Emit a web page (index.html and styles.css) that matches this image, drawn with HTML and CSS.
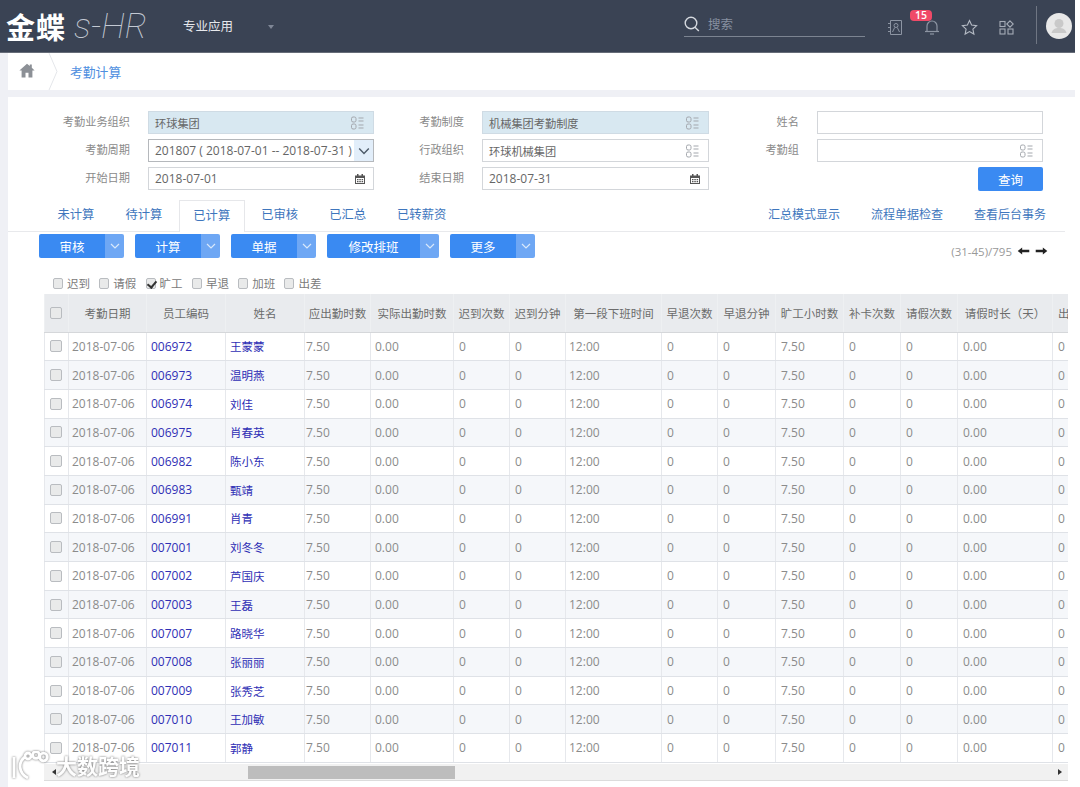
FILE: index.html
```html
<!DOCTYPE html>
<html lang="zh-CN">
<head>
<meta charset="utf-8">
<title>考勤计算</title>
<link rel="stylesheet" href="styles.css">
</head>
<body>
<svg class="defs" width="0" height="0">
  <symbol id="pick" viewBox="0 0 14 14"><g fill="none" stroke="currentColor" stroke-width="1"><rect x="1.5" y="1" width="4.5" height="5" rx="1.6"/><rect x="1.5" y="8" width="4.5" height="5" rx="1.6"/><path d="M8.5 2h5M8.5 5h5M8.5 9h5M8.5 12h5"/></g></symbol>
  <symbol id="cal" viewBox="0 0 12 12"><path fill="currentColor" d="M1 2.500h2V1h1.500v1.500h3V1H9v1.500h2V11H1zM2 5v5h8V5z"/><path fill="currentColor" d="M3 6h1.500v1.200H3zM5.300 6h1.500v1.200H5.300zM7.600 6h1.500v1.200H7.600zM3 8h1.500v1.200H3zM5.300 8h1.500v1.200H5.300zM7.600 8h1.500v1.200H7.600z"/></symbol>
  <symbol id="chev" viewBox="0 0 10 6"><path fill="none" stroke="currentColor" stroke-width="1.200" d="M1 1l4 4 4-4"/></symbol>
</svg>

<header class="top">
  <div class="brand"><span class="brand-cn">金蝶</span><span class="brand-en">s-HR</span></div>
  <div class="menu">专业应用</div>
  <span class="menu-caret"></span>
  <div class="search">
    <svg class="search-icon" width="16" height="16" viewBox="0 0 16 16"><g fill="none" stroke="#d5d9df" stroke-width="1.400"><circle cx="7" cy="7" r="5.800"/><path d="M11 11.200l3.800 3.800"/></g></svg>
    <span>搜索</span>
  </div>
  <div class="tools">
    <svg class="ico-book" width="16" height="17" viewBox="0 0 16 17"><g fill="none" stroke="#8d95a3" stroke-width="1"><path d="M3.500 1.500h11v14h-11zM1 4.500h3M1 8.500h3M1 12.500h3"/><circle cx="9" cy="6.500" r="2"/><path d="M5.500 13l2.200-4.500M12.500 13l-2.200-4.500"/></g></svg>
    <div class="bell">
      <svg width="16" height="17" viewBox="0 0 16 17"><g fill="none" stroke="#8d95a3" stroke-width="1.200"><path d="M3 12V7a5 5 0 0 1 10 0v5"/><path d="M1 12.500h14"/><path d="M6 15h4"/></g></svg>
      <span class="badge">15</span>
    </div>
    <svg class="ico-star" width="17" height="17" viewBox="0 0 17 17"><path fill="none" stroke="#b4bac4" stroke-width="1.100" d="M8.500 1.500l2.100 4.600 5 .6-3.700 3.400 1 5-4.400-2.500-4.400 2.500 1-5L1.400 6.700l5-.6z"/></svg>
    <svg class="ico-apps" width="15" height="15" viewBox="0 0 15 15"><g fill="none" stroke="#a5abb6" stroke-width="1.100"><rect x="1" y="1.500" width="5" height="5"/><path d="M11 .8l3.200 3.200-3.200 3.200L7.800 4z"/><rect x="1" y="9" width="5" height="5"/><rect x="9" y="9" width="5" height="5"/></g></svg>
  </div>
  <div class="avatar">
    <svg width="26" height="26" viewBox="0 0 26 26"><circle cx="13" cy="13" r="13" fill="#e8e8e8"/><circle cx="13" cy="10.500" r="4.500" fill="#c9c9c9"/><path fill="#c9c9c9" d="M5.500 20c1-4 4-5 7.500-5s6.500 1 7.500 5z"/></svg>
  </div>
</header>

<div class="shell">
  <nav class="crumbs">
    <svg class="home" width="16" height="15" viewBox="0 0 16 15"><path fill="#8c9096" d="M8 .8L.4 7.600h2.200V14.500h3.900V9.800h3V14.500h3.900V7.600h2.200L12.800 4.800V1.600h-2v1.400z"/></svg>
    <svg class="crumb-sep" width="10" height="37" viewBox="0 0 10 37"><path fill="none" stroke="#e4e6ea" d="M1 0l8 18.500L1 37"/></svg>
    <a class="crumb-link">考勤计算</a>
  </nav>

  <main class="panel">
    <section class="form">
      <label class="lab">考勤业务组织</label>
      <div class="field shade"><span>环球集团</span><svg class="f-ico"><use href="#pick"/></svg></div>
      <label class="lab">考勤制度</label>
      <div class="field shade"><span>机械集团考勤制度</span><svg class="f-ico"><use href="#pick"/></svg></div>
      <label class="lab">姓名</label>
      <div class="field"></div>

      <label class="lab">考勤周期</label>
      <div class="field select"><span>201807 ( 2018-07-01 -- 2018-07-31 )</span><b class="sel-btn"><svg width="12" height="8"><use href="#chev"/></svg></b></div>
      <label class="lab">行政组织</label>
      <div class="field"><span>环球机械集团</span><svg class="f-ico"><use href="#pick"/></svg></div>
      <label class="lab">考勤组</label>
      <div class="field"><span></span><svg class="f-ico"><use href="#pick"/></svg></div>

      <label class="lab">开始日期</label>
      <div class="field date"><span>2018-07-01</span><svg class="f-cal"><use href="#cal"/></svg></div>
      <label class="lab">结束日期</label>
      <div class="field date"><span>2018-07-31</span><svg class="f-cal"><use href="#cal"/></svg></div>
      <div class="query-cell"><button class="query">查询</button></div>
    </section>

    <section class="tabs">
      <a class="tab">未计算</a>
      <a class="tab">待计算</a>
      <a class="tab on">已计算</a>
      <a class="tab">已审核</a>
      <a class="tab">已汇总</a>
      <a class="tab">已转薪资</a>
      <div class="links"><a>汇总模式显示</a><a>流程单据检查</a><a>查看后台事务</a></div>
    </section>

    <section class="toolbar">
      <div class="bgroup"><button class="bmain">审核</button><button class="bcaret"><svg width="10" height="6"><use href="#chev"/></svg></button></div>
      <div class="bgroup"><button class="bmain">计算</button><button class="bcaret"><svg width="10" height="6"><use href="#chev"/></svg></button></div>
      <div class="bgroup"><button class="bmain">单据</button><button class="bcaret"><svg width="10" height="6"><use href="#chev"/></svg></button></div>
      <div class="bgroup"><button class="bmain wide">修改排班</button><button class="bcaret"><svg width="10" height="6"><use href="#chev"/></svg></button></div>
      <div class="bgroup"><button class="bmain">更多</button><button class="bcaret"><svg width="10" height="6"><use href="#chev"/></svg></button></div>
      <div class="pager">(31-45)/795
        <svg width="13" height="8" viewBox="0 0 13 9"><path fill="#222" d="M0 4.500L5 .5v2.500h8v3H5v2.500z"/></svg>
        <svg width="13" height="8" viewBox="0 0 13 9"><path fill="#222" d="M13 4.500L8 .5v2.500H0v3h8v2.500z"/></svg>
      </div>
    </section>

    <section class="filters">
      <label class="flt"><i class="cb"></i>迟到</label>
      <label class="flt"><i class="cb"></i>请假</label>
      <label class="flt"><i class="cb checked"></i>旷工</label>
      <label class="flt"><i class="cb"></i>早退</label>
      <label class="flt"><i class="cb"></i>加班</label>
      <label class="flt"><i class="cb"></i>出差</label>
    </section>

    <section class="grid">
      <div class="grid-body">
        <table>
          <colgroup>
            <col class="c24"><col class="c78"><col class="c79"><col class="c79"><col class="c66"><col class="c83"><col class="c56"><col class="c56"><col class="c96"><col class="c56"><col class="c58"><col class="c68"><col class="c57"><col class="c57"><col class="c95"><col class="c66">
          </colgroup>
          <thead>
            <tr><th><i class="cb big"></i></th><th>考勤日期</th><th>员工编码</th><th>姓名</th><th>应出勤时数</th><th>实际出勤时数</th><th>迟到次数</th><th>迟到分钟</th><th>第一段下班时间</th><th>早退次数</th><th>早退分钟</th><th>旷工小时数</th><th>补卡次数</th><th>请假次数</th><th>请假时长（天）</th><th class="left">出</th></tr>
          </thead>
          <tbody>
            <tr><td class="chk"><i class="cb big"></i></td><td>2018-07-06</td><td class="code">006972</td><td class="name">王蒙蒙</td><td>7.50</td><td>0.00</td><td>0</td><td>0</td><td>12:00</td><td>0</td><td>0</td><td>7.50</td><td>0</td><td>0</td><td>0.00</td><td>0</td></tr>
            <tr><td class="chk"><i class="cb big"></i></td><td>2018-07-06</td><td class="code">006973</td><td class="name">温明燕</td><td>7.50</td><td>0.00</td><td>0</td><td>0</td><td>12:00</td><td>0</td><td>0</td><td>7.50</td><td>0</td><td>0</td><td>0.00</td><td>0</td></tr>
            <tr><td class="chk"><i class="cb big"></i></td><td>2018-07-06</td><td class="code">006974</td><td class="name">刘佳</td><td>7.50</td><td>0.00</td><td>0</td><td>0</td><td>12:00</td><td>0</td><td>0</td><td>7.50</td><td>0</td><td>0</td><td>0.00</td><td>0</td></tr>
            <tr><td class="chk"><i class="cb big"></i></td><td>2018-07-06</td><td class="code">006975</td><td class="name">肖春英</td><td>7.50</td><td>0.00</td><td>0</td><td>0</td><td>12:00</td><td>0</td><td>0</td><td>7.50</td><td>0</td><td>0</td><td>0.00</td><td>0</td></tr>
            <tr><td class="chk"><i class="cb big"></i></td><td>2018-07-06</td><td class="code">006982</td><td class="name">陈小东</td><td>7.50</td><td>0.00</td><td>0</td><td>0</td><td>12:00</td><td>0</td><td>0</td><td>7.50</td><td>0</td><td>0</td><td>0.00</td><td>0</td></tr>
            <tr><td class="chk"><i class="cb big"></i></td><td>2018-07-06</td><td class="code">006983</td><td class="name">甄靖</td><td>7.50</td><td>0.00</td><td>0</td><td>0</td><td>12:00</td><td>0</td><td>0</td><td>7.50</td><td>0</td><td>0</td><td>0.00</td><td>0</td></tr>
            <tr><td class="chk"><i class="cb big"></i></td><td>2018-07-06</td><td class="code">006991</td><td class="name">肖青</td><td>7.50</td><td>0.00</td><td>0</td><td>0</td><td>12:00</td><td>0</td><td>0</td><td>7.50</td><td>0</td><td>0</td><td>0.00</td><td>0</td></tr>
            <tr><td class="chk"><i class="cb big"></i></td><td>2018-07-06</td><td class="code">007001</td><td class="name">刘冬冬</td><td>7.50</td><td>0.00</td><td>0</td><td>0</td><td>12:00</td><td>0</td><td>0</td><td>7.50</td><td>0</td><td>0</td><td>0.00</td><td>0</td></tr>
            <tr><td class="chk"><i class="cb big"></i></td><td>2018-07-06</td><td class="code">007002</td><td class="name">芦国庆</td><td>7.50</td><td>0.00</td><td>0</td><td>0</td><td>12:00</td><td>0</td><td>0</td><td>7.50</td><td>0</td><td>0</td><td>0.00</td><td>0</td></tr>
            <tr><td class="chk"><i class="cb big"></i></td><td>2018-07-06</td><td class="code">007003</td><td class="name">王磊</td><td>7.50</td><td>0.00</td><td>0</td><td>0</td><td>12:00</td><td>0</td><td>0</td><td>7.50</td><td>0</td><td>0</td><td>0.00</td><td>0</td></tr>
            <tr><td class="chk"><i class="cb big"></i></td><td>2018-07-06</td><td class="code">007007</td><td class="name">路晓华</td><td>7.50</td><td>0.00</td><td>0</td><td>0</td><td>12:00</td><td>0</td><td>0</td><td>7.50</td><td>0</td><td>0</td><td>0.00</td><td>0</td></tr>
            <tr><td class="chk"><i class="cb big"></i></td><td>2018-07-06</td><td class="code">007008</td><td class="name">张丽丽</td><td>7.50</td><td>0.00</td><td>0</td><td>0</td><td>12:00</td><td>0</td><td>0</td><td>7.50</td><td>0</td><td>0</td><td>0.00</td><td>0</td></tr>
            <tr><td class="chk"><i class="cb big"></i></td><td>2018-07-06</td><td class="code">007009</td><td class="name">张秀芝</td><td>7.50</td><td>0.00</td><td>0</td><td>0</td><td>12:00</td><td>0</td><td>0</td><td>7.50</td><td>0</td><td>0</td><td>0.00</td><td>0</td></tr>
            <tr><td class="chk"><i class="cb big"></i></td><td>2018-07-06</td><td class="code">007010</td><td class="name">王加敏</td><td>7.50</td><td>0.00</td><td>0</td><td>0</td><td>12:00</td><td>0</td><td>0</td><td>7.50</td><td>0</td><td>0</td><td>0.00</td><td>0</td></tr>
            <tr><td class="chk"><i class="cb big"></i></td><td>2018-07-06</td><td class="code">007011</td><td class="name">郭静</td><td>7.50</td><td>0.00</td><td>0</td><td>0</td><td>12:00</td><td>0</td><td>0</td><td>7.50</td><td>0</td><td>0</td><td>0.00</td><td>0</td></tr>
          </tbody>
        </table>
      </div>
      <div class="hbar">
        <span class="arr-l"></span>
        <span class="thumb"></span>
        <span class="arr-r"></span>
      </div>
    </section>
  </main>
</div>

<div class="watermark">
  <svg width="40" height="30" viewBox="0 0 40 30"><g fill="none" stroke="#fff" stroke-width="2.800"><path d="M5 6v21"/><path d="M16 6C9 11 9 22 19 27"/><circle cx="19" cy="5" r="3"/><circle cx="27" cy="4" r="3.400"/><circle cx="34.500" cy="6" r="3.800"/></g></svg>
  <span>大数跨境</span>
</div>
</body>
</html>
```
FILE: styles.css
```css
* { box-sizing: border-box; }
html, body { margin: 0; height: 100%; overflow: hidden; background: #fff; }
body {
  width: 1080px;
  height: 787px;
  position: relative;
  font: 12px "Open Sans", "Noto Sans CJK SC", sans-serif;
  color: #777;
}
.defs { position: absolute; }
a { cursor: pointer; }
button { font: inherit; border: 0; padding: 0; color: #fff; }

/* header */
.top {
  width: 1075px;
  height: 53px;
  background: #3a4354;
  border-bottom: 1px solid #666c78;
  display: flex;
  align-items: center;
  color: #fff;
}
.brand { width: 183px; padding-left: 6px; display: flex; align-items: center; height: 52px; }
.brand-cn { font-size: 29px; font-weight: 700; letter-spacing: 1px; color: #fff; width: 68px; white-space: nowrap; }
.brand-en { font: italic 100 35px "Roboto", sans-serif; color: #c3c9d3; white-space: nowrap; }
.menu { font-size: 12.500px; color: #e6e8ec; width: 85px; margin-top: -2px; }
.menu-caret { width: 0; height: 0; border: 3.500px solid transparent; border-top: 4px solid #7f8796; border-bottom: 0; margin-top: 1px; }
.search {
  margin-left: 410px;
  width: 181px;
  height: 26px;
  margin-top: -4px;
  border-bottom: 1px solid #7c8491;
  display: flex;
  align-items: center;
  gap: 8px;
  padding-bottom: 0;
  font-size: 12.500px;
  color: #8790a0;
}
.tools { margin-left: 22px; width: 150px; display: flex; align-items: center; margin-top: 2px; }
.bell { margin-left: 21px; position: relative; height: 17px; }
.badge {
  position: absolute;
  left: -14px;
  top: -9px;
  width: 22px;
  height: 11px;
  line-height: 11px;
  border-radius: 4px;
  background: #f04a68;
  color: #fff;
  font-size: 10.500px;
  font-weight: 600;
  text-align: center;
}
.ico-star { margin-left: 21px; }
.ico-apps { margin-left: 21px; }
.avatar {
  border-left: 1px solid #6f7683;
  height: 38px;
  padding-left: 9px;
  margin-left: -1px;
  margin-top: -2px;
  display: flex;
  align-items: center;
}
.avatar svg { margin-top: 2px; }

/* page shell */
.shell { padding-left: 8px; background: #eff0f5; width: 1075px; height: 734px; }
.crumbs {
  height: 37px;
  background: #fff;
  display: flex;
  align-items: center;
  padding-left: 11px;
  margin-bottom: 7px;
}
.home { margin-top: -2px; }
.crumb-sep { margin-left: 13px; }
.crumb-link { margin-left: 12px; color: #4f8fe0; font-size: 12.800px; }

.panel { background: #fff; height: 690px; padding-top: 14px; }

/* form */
.form {
  display: grid;
  grid-template-columns: 140px 226px 108px 227px 108px 226px;
  grid-auto-rows: 23px;
  row-gap: 5px;
  width: 1035px;
}
.lab { text-align: right; padding-right: 18px; line-height: 22px; font-size: 11.200px; color: #8a8a8a; }
.field {
  border: 1px solid #d3d6da;
  background: #fff;
  display: flex;
  align-items: center;
  justify-content: space-between;
  padding: 0 6px;
  font-size: 11.200px;
  color: #666;
}
.field.date { font-size: 12px; }
.field.shade { background: #d8e8f1; border-color: #cfdbe4; }
.f-ico { width: 14px; height: 14px; color: #a3a7ad; margin-right: 3px; }
.f-cal { width: 12px; height: 12px; color: #555; margin-right: 1px; }
.field.select { padding: 0 0 0 6px; border: 1.500px solid #b5b8bc; font-size: 12px; white-space: nowrap; }
.sel-btn {
  width: 19px;
  height: 100%;
  background: #e2eefa;
  display: flex;
  align-items: center;
  justify-content: center;
  color: #4d5a68;
  flex: none;
}
.query-cell { grid-column: 6; display: flex; justify-content: flex-end; }
.query { width: 65px; height: 24px; background: #3a8af2; border-radius: 2px; font-size: 12.500px; }

/* tabs */
.tabs {
  margin-top: 10px;
  height: 32px;
  width: 1057px;
  padding-left: 35px;
  display: flex;
  border-bottom: 1px solid #e8e9ec;
  font-size: 12.300px;
  color: #3e76bd;
}
.tab { padding: 0 14.500px; margin-right: 2px; height: 31px; line-height: 29px; text-align: center; white-space: nowrap; }
.tab.on { background: #fff; border: 1px solid #e6e7ea; border-bottom: 0; height: 32px; padding: 0 13.500px; }
.links { margin-left: auto; display: flex; gap: 31px; line-height: 29px; padding-right: 19px; font-size: 12px; }

/* toolbar */
.toolbar { margin-top: 2px; height: 24px; display: flex; padding-left: 31px; gap: 11px; width: 1040px; }
.bgroup { display: flex; }
.bmain { width: 66px; height: 24px; background: #3a8af2; border-radius: 2px 0 0 2px; font-size: 12.500px; }
.bmain.wide { width: 93px; }
.bcaret {
  width: 19px;
  height: 24px;
  background: #6ea7f4;
  border-radius: 0 2px 2px 0;
  color: #d9e8fb;
  display: flex;
  align-items: center;
  justify-content: center;
}
.pager { margin-left: auto; display: flex; align-items: center; gap: 5px; font-size: 11.500px; color: #999; height: 14px; margin-top: 10px; white-space: nowrap; }

/* filters */
.filters { margin-top: 19px; height: 13px; padding-left: 45px; display: flex; line-height: 13px; }
.flt { width: 46.300px; display: flex; align-items: center; gap: 4px; font-size: 11.500px; color: #7a7a7a; white-space: nowrap; }
.cb {
  display: block;
  flex: none;
  width: 10px;
  height: 11px;
  border: 1px solid #b9bcc0;
  border-radius: 2px;
  background: #e9eaea;
  position: relative;
}
.cb.big { width: 12px; height: 12px; margin-left: 5px; }
.cb.checked::after {
  content: "";
  position: absolute;
  left: 2px;
  top: 0;
  width: 4px;
  height: 7px;
  border: solid #333;
  border-width: 0 2px 2px 0;
  transform: rotate(40deg);
}

/* table */
.grid { margin: 4px 0 0 36px; width: 1024px; }
.grid-body { height: 470px; overflow: hidden; }
table { border-collapse: collapse; table-layout: fixed; width: 1074px; }
.c24 { width: 24px; } .c78 { width: 78px; } .c79 { width: 79px; } .c66 { width: 66px; }
.c83 { width: 83px; } .c56 { width: 56px; } .c96 { width: 96px; } .c58 { width: 58px; }
.c68 { width: 68px; } .c57 { width: 57px; } .c95 { width: 95px; }
th {
  height: 38px;
  background: #e9ebee;
  border-left: 1px solid #eef0f2;
  font-weight: 400;
  font-size: 11.500px;
  color: #6b6b6b;
  padding: 0;
  text-align: center;
  white-space: nowrap;
  overflow: hidden;
  border-bottom: 1px solid #d5d7da;
}
th.left { text-align: left; padding-left: 5px; }
td {
  height: 28.700px;
  padding: 0 0 0 5px;
  border-left: 1px solid #e6e8ec;
  border-bottom: 1px solid #dfe2e7;
  font-size: 12px;
  color: #8b8b8b;
  white-space: nowrap;
}
td.chk { padding: 0; }
td:nth-child(2), td:nth-child(9) { padding-left: 3px; }
td:nth-child(3), td:nth-child(4), td:nth-child(6) { padding-left: 4px; }
td:nth-child(5) { padding-left: 1px; }
td.code { color: #2f2fb5; }
td.name { color: #2f2fb5; font-size: 11.500px; }
tbody tr:nth-child(even) td { background: #f5f7fa; }

.hbar {
  height: 17px;
  background: #f1f1f1;
  border-bottom: 1px solid #dcdcdc;
  display: flex;
  align-items: center;
}
.arr-l { width: 0; height: 0; border: 3.500px solid transparent; border-right: 4px solid #333; border-left: 0; margin-left: 8px; }
.thumb { width: 207px; height: 13px; background: #bdbdbd; margin-left: 192px; }
.arr-r { width: 0; height: 0; border: 3.500px solid transparent; border-left: 4px solid #333; border-right: 0; margin-left: auto; margin-right: 6px; }

/* watermark */
.watermark {
  position: absolute;
  left: 9px;
  top: 751px;
  display: flex;
  align-items: center;
  gap: 7px;
  opacity: .92;
  filter: drop-shadow(0 0 1px #666);
}
.watermark span { font-size: 21px; font-weight: 700; color: #fff; line-height: 30px; letter-spacing: 0; }
```
